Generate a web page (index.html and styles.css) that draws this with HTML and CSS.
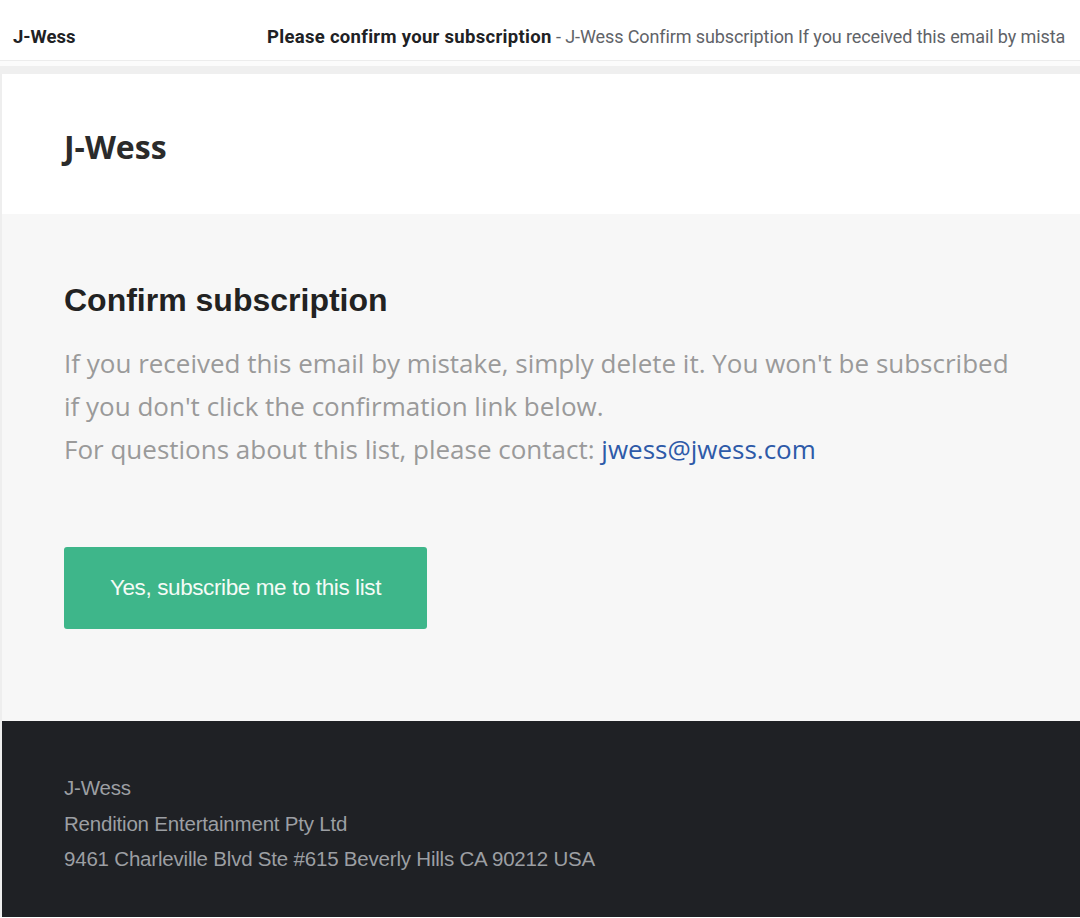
FILE: index.html
```html
<!DOCTYPE html>
<html>
<head>
<meta charset="utf-8">
<link rel="stylesheet" href="styles.css">
</head>
<body>
<div class="topbar">
  <div class="sender">J-Wess</div>
  <div class="subject-line"><span class="subject">Please confirm your subscription</span><span class="snippet"> - J-Wess Confirm subscription If you received this email by mista</span></div>
</div>
<div class="gap"></div>
<div class="email">
  <div class="email-header">
    <div class="brand">J-Wess</div>
  </div>
  <div class="email-body">
    <h1 class="title">Confirm subscription</h1>
    <p class="text">If you received this email by mistake, simply delete it. You won't be subscribed if you don't click the confirmation link below.<br>For questions about this list, please contact: <a class="link" href="#">jwess@jwess.com</a></p>
    <a class="button" href="#">Yes, subscribe me to this list</a>
  </div>
  <div class="email-footer">
    <div class="foot-line">J-Wess</div>
    <div class="foot-line">Rendition Entertainment Pty Ltd</div>
    <div class="foot-line">9461 Charleville Blvd Ste #615 Beverly Hills CA 90212 USA</div>
  </div>
</div>
</body>
</html>
```
FILE: styles.css
```css
html, body {
  margin: 0;
  padding: 0;
  background: #ffffff;
  overflow: hidden;
}
body {
  width: 1080px;
  height: 918px;
}
.topbar {
  height: 61px;
  box-sizing: border-box;
  padding-top: 13px;
  display: flex;
  align-items: center;
  border-bottom: 1px solid #ececec;
  font-family: Roboto, "Noto Sans", sans-serif;
  font-size: 18.5px;
  white-space: nowrap;
  overflow: hidden;
}
.sender {
  width: 254px;
  padding-left: 13px;
  font-weight: 700;
  color: #202124;
  flex-shrink: 0;
}
.subject-line {
  overflow: hidden;
  flex: 1;
  min-width: 0;
}
.subject {
  font-weight: 700;
  color: #202124;
  letter-spacing: 0.3px;
}
.snippet {
  color: #5f6368;
  font-size: 18px;
  letter-spacing: -0.1px;
}
.gap {
  height: 5px;
  background: #fbfbfb;
  border-bottom: 8px solid #efefef;
}
.email {
  border-left: 2px solid #eeeeee;
}
.email-header {
  height: 140px;
  box-sizing: border-box;
  padding: 5px 0 0 62px;
  background: #ffffff;
  display: flex;
  align-items: center;
}
.brand {
  font-family: "Open Sans", "Noto Sans", sans-serif;
  font-weight: 700;
  font-size: 32px;
  color: #2b2b2b;
}
.email-body {
  background: #f7f7f7;
  padding: 68px 62px 92px;
}
.title {
  margin: 0;
  font-family: "Liberation Sans", Arial, sans-serif;
  font-weight: 700;
  font-size: 32px;
  line-height: 36px;
  color: #222222;
}
.text {
  margin: 24px 0 0;
  font-family: "Open Sans", "Noto Sans", sans-serif;
  font-size: 26px;
  line-height: 43px;
  color: #9a9a9a;
}
.link {
  color: #2e5aa8;
  text-decoration: none;
}
.button {
  display: flex;
  align-items: center;
  justify-content: center;
  margin-top: 76px;
  width: 363px;
  height: 82px;
  background: #3eb68a;
  border-radius: 3px;
  color: #f4fbf6;
  text-decoration: none;
  font-family: "Liberation Sans", Arial, sans-serif;
  font-size: 22.5px;
  letter-spacing: -0.4px;
}
.email-footer {
  background: #1f2125;
  height: 196px;
  box-sizing: border-box;
  padding: 49px 62px 0;
  display: flex;
  flex-direction: column;
}
.foot-line {
  font-family: "Liberation Sans", Arial, sans-serif;
  font-size: 20.5px;
  line-height: 35.5px;
  color: #9c9fa3;
  letter-spacing: -0.2px;
}
```
